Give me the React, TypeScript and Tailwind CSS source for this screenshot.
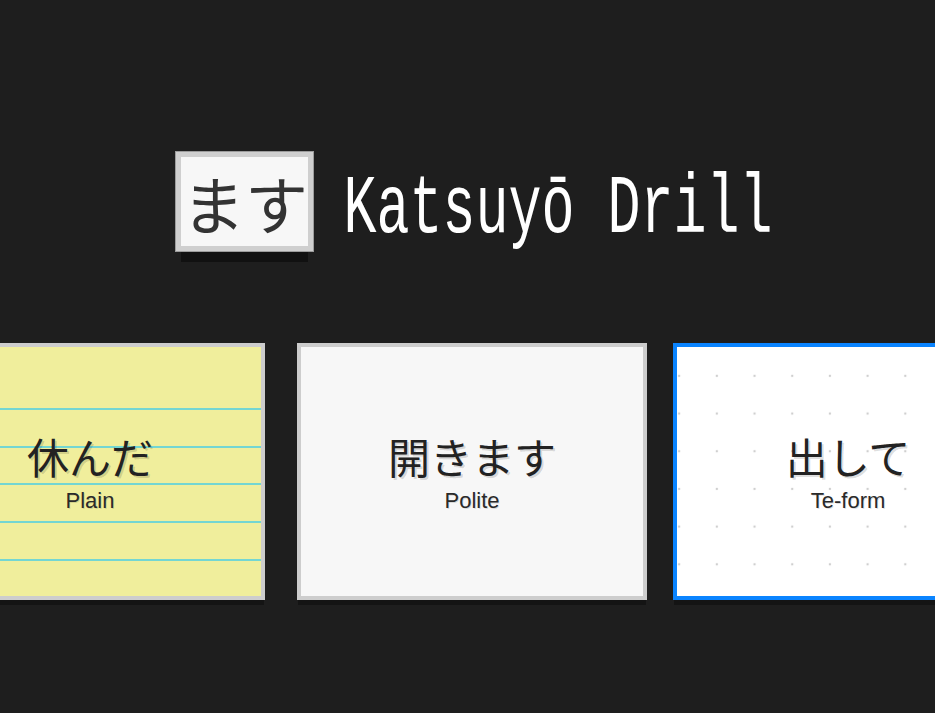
import type { ReactNode } from 'react';

type Conjugation = {
    word: string;
    label: string;
    paper: 'lined' | 'plain' | 'dotted';
    active?: boolean;
};

const cards: Conjugation[] = [
    { word: '休んだ', label: 'Plain', paper: 'lined' },
    { word: '開きます', label: 'Polite', paper: 'plain' },
    { word: '出して', label: 'Te-form', paper: 'dotted', active: true },
];

const jp = "font-['Noto_Sans_CJK_JP',sans-serif]";

function Card({ word, label, paper, active }: Conjugation) {
    const paperClass =
        paper === 'lined'
            ? 'bg-[#f0ee9c]'
            : paper === 'dotted'
              ? 'bg-white bg-[radial-gradient(circle,#cfcfcf_1.2px,transparent_1.6px)] bg-[length:37.7px_37.7px] bg-[position:21px_10px]'
              : 'bg-[#f7f7f7]';

    return (
        <div
            className={`relative shrink-0 w-[350px] h-[257px] border-4 ${active ? 'border-[#0a84ff]' : 'border-[#cdcdcd]'} ${paperClass} shadow-[0_6px_0_-1px_#141414]`}
        >
            {paper === 'lined' && (
                <div className="absolute inset-x-0 top-[61px] bottom-0 bg-[repeating-linear-gradient(to_bottom,#74d6d2_0,#74d6d2_2px,transparent_2px,transparent_37.66px)]" />
            )}
            <div className="relative h-full flex flex-col items-center justify-center pt-1">
                <div className={`${jp} text-[42px] leading-[44px] text-[#222] [text-shadow:2px_2px_0_rgba(0,0,0,0.15)]`}>
                    {word}
                </div>
                <div className="font-['Liberation_Sans',sans-serif] text-[22px] leading-[26px] text-[#2a2a2a] mt-[10px] [text-shadow:1px_1px_0_rgba(0,0,0,0.12)]">
                    {label}
                </div>
            </div>
        </div>
    );
}

function Logo({ children }: { children: ReactNode }) {
    return (
        <div className="w-[137px] h-[99px] flex items-center justify-center bg-[#f7f7f7] border-[5px] border-[#cfcfcf] outline outline-1 outline-[#9c9c9c] shadow-[0_16px_0_-5px_#111]">
            <span className={`${jp} text-[63px] leading-none text-[#333]`}>{children}</span>
        </div>
    );
}

export default function App() {
    return (
        <div className="min-h-screen w-full bg-[#1e1e1e] overflow-hidden">
            <div className="flex items-center justify-center gap-[30px] pt-[152px] pl-[14px]">
                <Logo>ます</Logo>
                <div className="pt-[17px]">
                    <h1 className="font-['Liberation_Mono',monospace] text-[55px] leading-none text-white scale-y-[1.5]">
                        Katsuyō Drill
                    </h1>
                </div>
            </div>

            <div className="flex justify-center items-start mt-[92px] pl-[3px]">
                <div className="flex gap-8">
                    <Card {...cards[0]} />
                    <Card {...cards[1]} />
                </div>
                <div className="ml-[26px]">
                    <Card {...cards[2]} />
                </div>
            </div>
        </div>
    );
}
